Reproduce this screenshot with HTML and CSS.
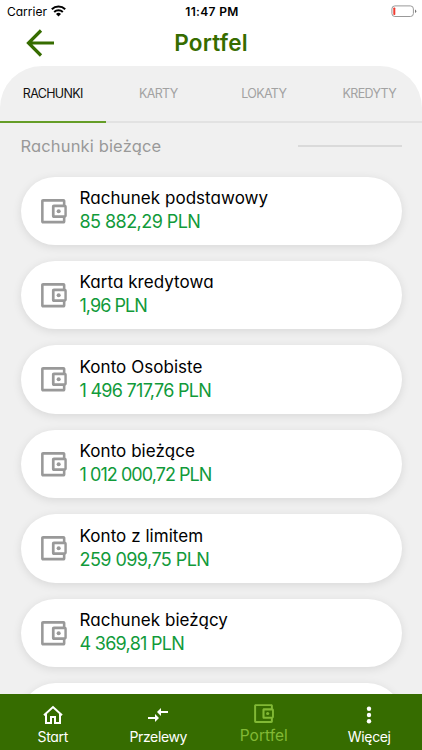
FILE: index.html
```html
<!DOCTYPE html>
<html lang="pl">
<head>
<meta charset="utf-8">
<title>Portfel</title>
<link rel="stylesheet" href="styles.css">
</head>
<body>
<svg class="defs" width="0" height="0">
  <symbol id="wallet" viewBox="0 0 24 24"><path fill="currentColor" d="M21 7.28V4.5C21 3.6 20.4 3 19.5 3h-15C3.6 3 3 3.6 3 4.5v15c0 .9.6 1.5 1.5 1.5h15c.9 0 1.5-.6 1.5-1.5v-2.78c.59-.25 1-.78 1-1.52V8.8c0-.74-.41-1.27-1-1.52zM20.2 9v6H13V9h7.200zM4.900 19.100V4.900h14.200v2.100h-6.600c-.9 0-1.500.6-1.500 1.500v7c0 .9.6 1.500 1.500 1.500h6.600v2.100H4.900z"/><circle cx="16" cy="12" r="1.5" fill="currentColor"/></symbol>
</svg>
<div class="app">
  <div class="status">
    <div class="carrier"><span>Carrier</span>
      <svg width="15" height="12" viewBox="0 0 15 12"><g fill="none" stroke="#000" stroke-width="2"><path d="M.8 4.300a9.600 9.600 0 0 1 13.400 0"/><path d="M3.200 7a6.200 6.200 0 0 1 8.600 0"/></g><path d="M5 8.900a3.700 3.700 0 0 1 5 0L7.500 11.500z"/></svg>
    </div>
    <div class="clock">11:47 PM</div>
    <svg class="battery" width="26" height="13" viewBox="0 0 26 13"><rect x=".9" y=".9" width="21.500" height="10.600" rx="3" fill="none" stroke="#999"/><rect x="2.300" y="2.500" width="2" height="7.500" rx=".8" fill="#f03b30"/><path d="M24 4.500q1.300.5 1.300 1.800T24 8z" fill="#777"/></svg>
  </div>
  <header class="header">
    <svg class="back" width="28" height="28" viewBox="0 0 28 28"><path d="M15 1.500 2.500 14 15 26.500M2.500 14H28" fill="none" stroke="#366c00" stroke-width="3.200"/></svg>
    <h1>Portfel</h1>
  </header>
  <main class="panel">
    <nav class="tabs">
      <div class="tab active"><span>RACHUNKI</span></div>
      <div class="tab"><span>KARTY</span></div>
      <div class="tab"><span>LOKATY</span></div>
      <div class="tab"><span>KREDYTY</span></div>
    </nav>
    <div class="section"><h2>Rachunki bieżące</h2><i class="rule"></i></div>
    <div class="list">
      <div class="card"><svg class="wallet"><use href="#wallet"/></svg><div class="info"><div class="name">Rachunek podstawowy</div><div class="amount">85 882,29 PLN</div></div></div>
      <div class="card"><svg class="wallet"><use href="#wallet"/></svg><div class="info"><div class="name">Karta kredytowa</div><div class="amount tighter">1,96 PLN</div></div></div>
      <div class="card"><svg class="wallet"><use href="#wallet"/></svg><div class="info"><div class="name">Konto Osobiste</div><div class="amount tight">1 496 717,76 PLN</div></div></div>
      <div class="card"><svg class="wallet"><use href="#wallet"/></svg><div class="info"><div class="name">Konto bieżące</div><div class="amount tighter">1 012 000,72 PLN</div></div></div>
      <div class="card"><svg class="wallet"><use href="#wallet"/></svg><div class="info"><div class="name">Konto z limitem</div><div class="amount">259 099,75 PLN</div></div></div>
      <div class="card"><svg class="wallet"><use href="#wallet"/></svg><div class="info"><div class="name">Rachunek bieżący</div><div class="amount tight">4 369,81 PLN</div></div></div>
      <div class="card"></div>
    </div>
  </main>
  <nav class="bottom">
    <div class="item"><svg width="24" height="24" viewBox="0 0 24 24"><path d="M5 11v9h5v-6h4v6h5v-9M3 12.300l9-8.300 9 8.300" fill="none" stroke="#fff" stroke-width="2"/></svg><span>Start</span></div>
    <div class="item"><svg width="24" height="24" viewBox="0 0 24 24"><path fill="#fff" d="M9.010 14H2v2h7.010v3L13 15l-3.990-4v3zm5.980-1v-3H22V8h-7.010V5L11 9l3.990 4z"/></svg><span>Przelewy</span></div>
    <div class="item selected"><svg width="25" height="25"><use href="#wallet"/></svg><span>Portfel</span></div>
    <div class="item"><svg width="24" height="24" viewBox="0 0 24 24" fill="#fff"><circle cx="12" cy="5.700" r="2.200"/><circle cx="12" cy="12" r="2.200"/><circle cx="12" cy="18.300" r="2.200"/></svg><span>Więcej</span></div>
  </nav>
</div>
</body>
</html>
```
FILE: styles.css
```css
* { box-sizing: border-box; }
body { margin: 0; font-family: Inter, "Open Sans", sans-serif; font-feature-settings: "cv11" 1; background: #fff; }
.defs { display: none; }
.app { width: 422px; height: 750px; overflow: hidden; display: flex; flex-direction: column; }
.status { flex: none; height: 22px; display: grid; grid-template-columns: 1fr auto 1fr; align-items: center; padding: 0 5px 0 7px; font-size: 12px; }
.carrier { display: flex; align-items: center; gap: 4px; }
.clock { font-weight: 600; letter-spacing: .35px; }
.battery { justify-self: end; }
.header { flex: none; height: 44px; display: grid; grid-template-columns: 1fr auto 1fr; padding: 0 26px; }
.back { margin-top: 7px; }
h1 { margin: 0; font-size: 22.500px; line-height: 42px; font-weight: 600; letter-spacing: .2px; color: #366c00; }
.panel { flex: 1; min-height: 0; overflow: hidden; background: #f0f0f0; border-radius: 42px 42px 0 0; }
.tabs { height: 56.500px; display: grid; grid-template-columns: repeat(4, 1fr); }
.tab { text-align: center; font-size: 12.500px; letter-spacing: -.65px; line-height: 55px; color: #a2a2a2; border-bottom: 2px solid #e2e2e2; }
.tab.active { color: #111; border-bottom-color: #659d27; }
.section { height: 54px; padding: 0 20.500px; display: flex; justify-content: space-between; }
h2 { margin: 0; font-size: 16.500px; letter-spacing: .15px; line-height: 46px; font-weight: 400; color: #999; }
.rule { width: 104px; height: 2px; margin-top: 22px; background: #dadada; }
.list { padding: 0 20.500px; display: flex; flex-direction: column; gap: 16.200px; }
.card { flex: none; height: 68.300px; border-radius: 35px; background: #fff; box-shadow: 0 2px 10px rgba(0,0,0,.1); display: flex; padding-left: 16.500px; }
.wallet { width: 32.500px; height: 32.500px; color: #999; margin-top: 18px; }
.info { margin-left: 10px; padding-top: 10.500px; white-space: nowrap; }
.name { font-size: 17px; line-height: 23px; letter-spacing: .05px; color: #000; }
.amount { font-size: 18px; line-height: 24px; letter-spacing: -.55px; color: #119a3a; }
.amount.tight { letter-spacing: -.72px; }
.amount.tighter { letter-spacing: -.95px; }
.bottom { flex: none; height: 56px; background: #366c00; color: #fff; display: grid; grid-template-columns: repeat(4, 1fr); font-size: 14px; letter-spacing: -.35px; }
.item { display: flex; flex-direction: column; align-items: center; padding-top: 9px; }
.item span { line-height: 19px; }
.selected { color: #82b935; font-size: 15.500px; letter-spacing: 0; padding-top: 7px; }
```
